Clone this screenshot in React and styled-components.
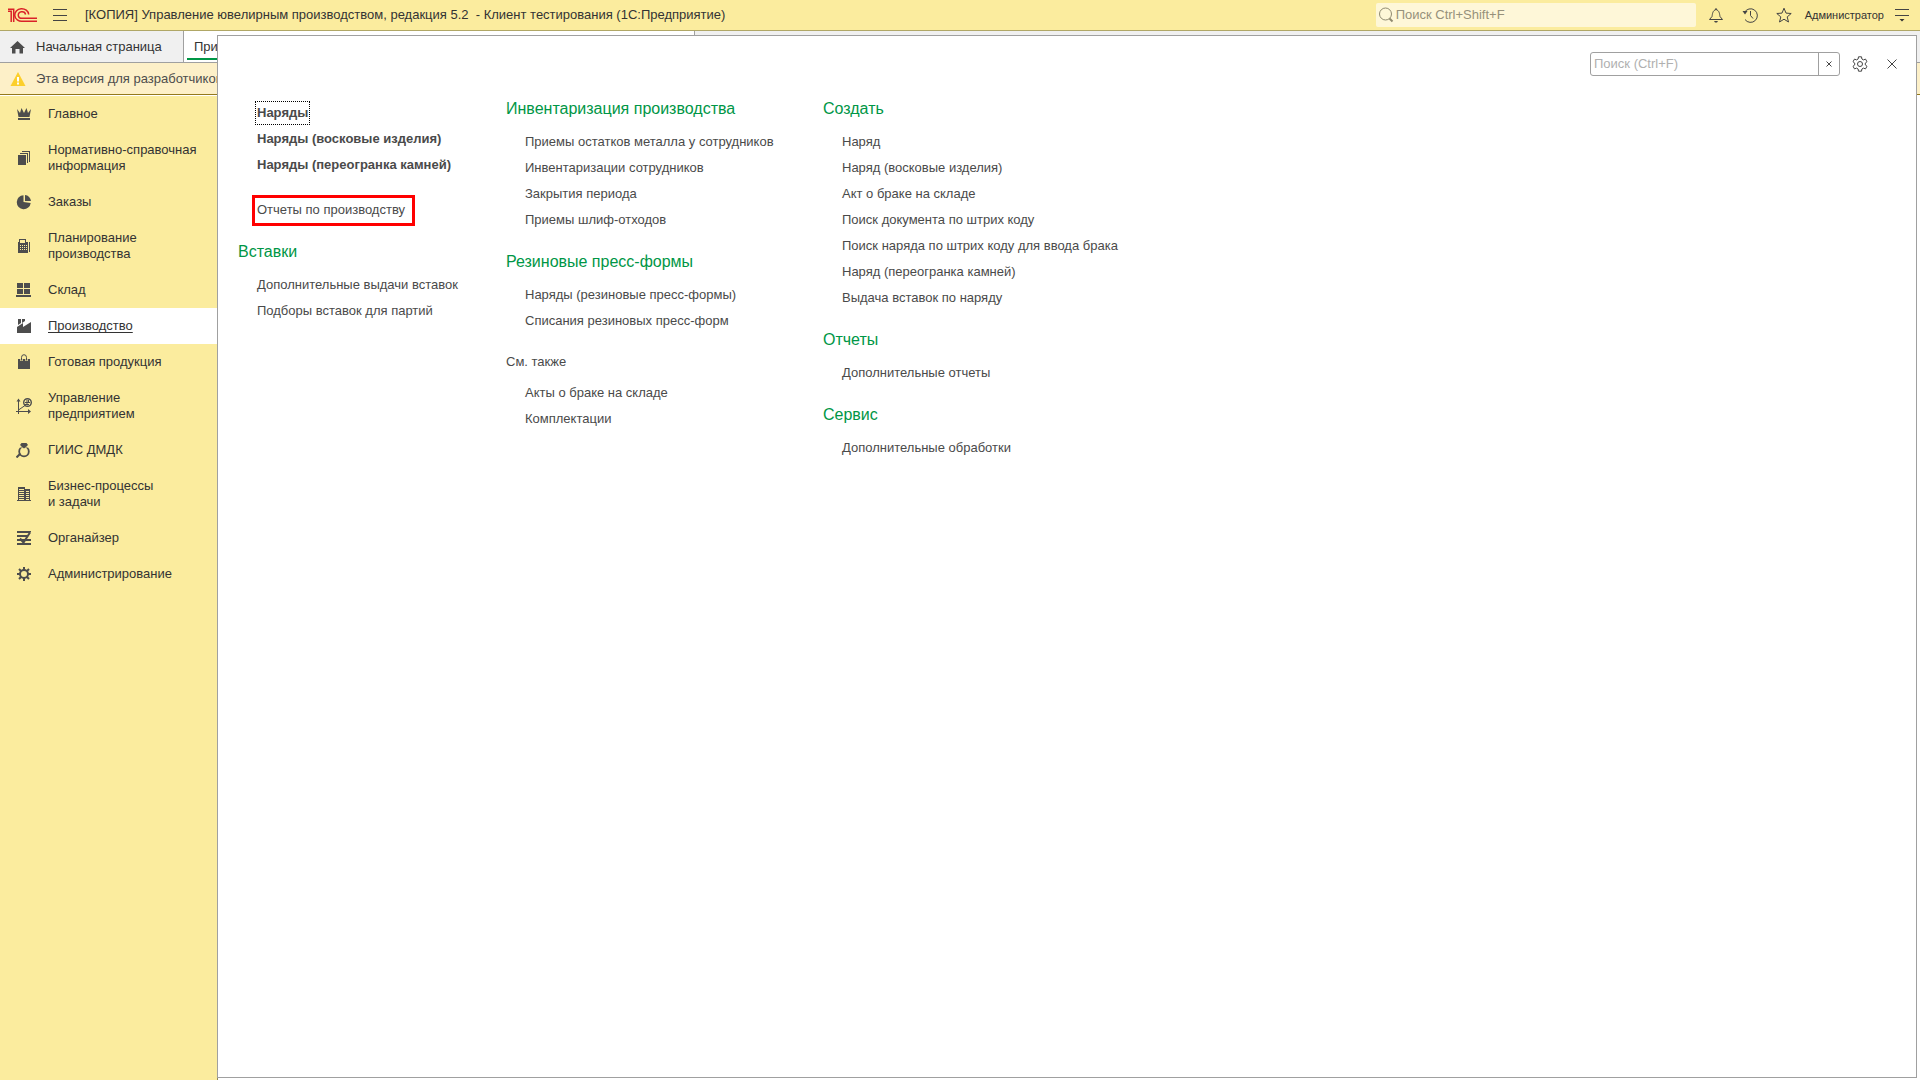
import React from "react";
import styled, { createGlobalStyle, css } from "styled-components";

const color = {
  yellow: "#fbec9e",
  yellowLine: "#b0a766",
  ink: "#333333",
  item: "#4a4a4a",
  icon: "#4d4d4d",
  green: "#009646",
  grey: "#a0a0a0",
  tabs: "#f0f0f0",
};

const GlobalStyle = createGlobalStyle`
  *, *::before, *::after { box-sizing: border-box; }
  body {
    margin: 0;
    background: #ffffff;
    color: ${color.ink};
    font-family: "Liberation Sans", Arial, sans-serif;
    font-size: 13px;
    line-height: 16px;
  }
  button, input { font: inherit; color: inherit; }
  a { color: inherit; text-decoration: none; }
  svg { display: block; flex: none; }
`;

const Shell = styled.div`
  position: relative;
  display: flex;
  flex-direction: column;
  min-height: 100vh;
`;

const TopBar = styled.header`
  display: flex;
  align-items: center;
  height: 31px;
  padding: 0 4px 0 8px;
  background: ${color.yellow};
  border-bottom: 1px solid ${color.yellowLine};
`;

const IconButton = styled.button`
  display: grid;
  place-items: center;
  flex: none;
  width: ${(p) => p.$width || 34}px;
  height: 24px;
  padding: 0;
  border: 0;
  background: none;
`;

const Title = styled.h1`
  flex: 1;
  margin: 0 0 0 3px;
  font-size: 13px;
  font-weight: 400;
  white-space: pre;
`;

const GlobalSearch = styled.label`
  display: flex;
  align-items: center;
  gap: 2px;
  width: 320px;
  height: 24px;
  margin-right: 3px;
  padding: 0 2px;
  border-radius: 2px;
  background: #fef7d8;
`;

const SearchInput = styled.input`
  flex: 1;
  min-width: 0;
  height: 22px;
  padding: 0 0 2px;
  border: 0;
  outline: 0;
  background: transparent;
  &::placeholder {
    color: ${(p) => p.$hint};
    opacity: 1;
  }
`;

const UserButton = styled.button`
  padding: 0 4px;
  border: 0;
  background: none;
  font-size: 11px;
  line-height: 16px;
`;

const TabBar = styled.div`
  display: flex;
  height: 32px;
  background: ${color.tabs};
  border-bottom: 1px solid ${color.grey};
`;

const Tab = styled.button`
  position: relative;
  display: flex;
  align-items: center;
  gap: 10px;
  width: ${(p) => p.$width}px;
  padding: 0 10px;
  border: 0;
  border-right: 1px solid ${color.grey};
  background: ${color.tabs};
  white-space: nowrap;
  ${(p) =>
    p.$active &&
    css`
      background: #ffffff;
      &::after {
        content: "";
        position: absolute;
        inset: auto 3px 2px 3px;
        height: 2px;
        background: ${color.green};
      }
    `}
`;

const Notice = styled.div`
  display: flex;
  align-items: center;
  gap: 10px;
  height: 32px;
  padding: 0 10px;
  background: #fdf0c8;
  border-bottom: 1px solid #94791c;
  color: #4d4d4d;
`;

const Body = styled.div`
  display: flex;
  flex: 1;
  padding-top: 1px;
`;

const Sidebar = styled.nav`
  display: flex;
  flex-direction: column;
  width: 218px;
  background: ${color.yellow};
  border-right: 1px solid #8f8857;
`;

const Section = styled.a`
  display: flex;
  align-items: center;
  gap: 16px;
  padding: 10px 16px;
  white-space: pre-line;
  background: ${(p) => (p.$active ? "#ffffff" : "transparent")};
  text-decoration: ${(p) => (p.$active ? "underline" : "none")};
  text-decoration-skip-ink: none;
  text-underline-offset: 2px;
`;

const Popup = styled.main`
  position: absolute;
  inset: 35px 3px 2px 217px;
  background: #ffffff;
  border: 1px solid ${color.grey};
`;

const PopupTools = styled.div`
  display: flex;
  justify-content: flex-end;
  align-items: center;
  padding: 16px 8px 0 0;
`;

const MenuSearch = styled.label`
  display: flex;
  width: 250px;
  height: 24px;
  margin-right: 4px;
  padding-left: 3px;
  border: 1px solid ${color.grey};
  border-radius: 3px;
`;

const ClearButton = styled.button`
  display: grid;
  place-items: center;
  width: 21px;
  padding: 0;
  border: 0;
  border-left: 1px solid ${color.grey};
  background: none;
`;

const Columns = styled.div`
  display: grid;
  grid-template-columns: 268px 317px auto;
  padding: 23px 20px;
`;

const Column = styled.section`
  color: ${color.item};
`;

const Group = styled.div`
  & + & {
    margin-top: ${(p) => (p.$untitled ? 20 : 19)}px;
  }
  &:first-child {
    margin-top: ${(p) => (p.$untitled ? 1 : 0)}px;
  }
`;

const GroupTitle = styled.h2`
  margin: 0 0 ${(p) => (p.$plain ? 9 : 10)}px;
  color: ${(p) => (p.$plain ? color.item : color.green)};
  font-size: ${(p) => (p.$plain ? 13 : 16)}px;
  font-weight: 400;
  line-height: ${(p) => (p.$plain ? 18 : 20)}px;
`;

const List = styled.ul`
  margin: 0;
  padding: 0 0 0 19px;
  list-style: none;
`;

const Row = styled.li`
  display: flex;
  align-items: center;
  height: 26px;
`;

const Command = styled.a`
  position: relative;
  font-weight: ${(p) => (p.$bold ? 700 : 400)};
  white-space: nowrap;
  ${(p) =>
    p.$focused &&
    css`
      outline: 1px dotted #000000;
      outline-offset: 1px;
      padding: 2px 0;
    `}
  ${(p) =>
    p.$marked &&
    css`
      &::after {
        content: "";
        position: absolute;
        inset: -7px -10px -8px -5px;
        border: 3px solid #ff0000;
      }
    `}
`;

const Svg = ({ size = 16, w, h, children, ...rest }) => (
  <svg
    width={w || size}
    height={h || size}
    viewBox={`0 0 ${w || size} ${h || size}`}
    fill="none"
    aria-hidden="true"
    {...rest}
  >
    {children}
  </svg>
);

const Logo = () => (
  <Svg w={30} h={18} stroke="#da2128" strokeWidth="1.5">
    <path d="M0 5.200h3.200V16M0 3.200h5.700V16" />
    <path d="M20.700 8.500A7 6.300 0 1 0 14.500 15.200H29" />
    <path d="M17.600 8.500A3.700 3.300 0 1 0 14.500 12.300H29" />
  </Svg>
);

const line = { stroke: "#444444", strokeWidth: 1 };

const icons = {
  crown: <path d="M1 3l3 4 1.500-5L8 7l2.500-5L12 7l3-4-1.500 8h-11zM2 12h12v2H2z" />,
  sheets: <path d="M2 5h8v10H2zM4 3h8v10h-1V4H4zM6 1h8v11h-1V2H6z" />,
  pie: (
    <>
      <path d="M7.500 1.200A7 7 0 1 0 14.700 9L7.500 8z" />
      <path d="M9 1a6.500 6.500 0 0 1 6 6H9z" />
    </>
  ),
  calc: (
    <path
      fillRule="evenodd"
      d="M3 1h7v3h2v11H2V4h1zM4 2v3h5V2zM4 7v1h1V7zM6 7v1h1V7zM8 7v1h1V7zM10 7v1h1V7zM4 9v1h1V9zM6 9v1h1V9zM8 9v1h1V9zM10 9v1h1V9zM4 11v1h1v-1zM6 11v1h1v-1zM8 11v1h1v-1zM10 11v1h1v-1zM13 4h1v10h-1z"
    />
  ),
  store: <path d="M1 1h6v5H1zM8 1h6v5H8zM1 7h6v5H1zM8 7h6v5H8zM0 13h15v2H0z" />,
  factory: <path d="M2 1h3v4L2 7zM6 1h3v2L6 5zM1 9l6-4v4l8-5v11H1z" />,
  bag: (
    <>
      <path d="M2 5h12v10H2z" />
      <path d="M5.500 7V3.500a2.500 2.800 0 0 1 5 0V7" fill="none" stroke="#fbec9e" strokeWidth="2.400" />
      <path d="M5.500 6.500V3.500a2.500 2.800 0 0 1 5 0V6.500" fill="none" stroke="#4d4d4d" strokeWidth="1" />
    </>
  ),
  growth: (
    <>
      <path d="M2.500 16V2M0 13.500h14M2.500 12L9 7.500" fill="none" stroke="#4d4d4d" />
      <path d="M0.500 3.500l2-3 2 3zM12 11l3 2.500-3 2.500z" />
      <circle cx="11.500" cy="4.500" r="3.800" fill="none" stroke="#4d4d4d" strokeWidth="1.400" />
      <path d="M9 4h5v1H9zM9 6h4v1H9zM10.500 2h1v5h-1zM12 2h1v2h-1z" />
    </>
  ),
  ring: (
    <>
      <circle cx="8" cy="9.500" r="4.800" fill="none" stroke="#4d4d4d" strokeWidth="1.800" />
      <path d="M4 5h8" stroke="#fbec9e" strokeWidth="1" />
      <path d="M5.500 1h5L12 3 8 6.500 4 3z" />
      <path d="M0.500 15.500l4-4" stroke="#4d4d4d" strokeWidth="2" />
    </>
  ),
  offices: (
    <path
      fillRule="evenodd"
      d="M2 1h7v2h5v11h1v1H1v-1h1zM3 3v1h5V3zM3 5v1h5V5zM3 7v1h5V7zM3 9v1h5V9zM3 11v1h5v-1zM3 13v1h5v-1zM10 5v1h3V5zM10 7v1h3V7zM10 9v1h3V9zM10 11v1h3v-1zM10 13v1h3v-1z"
    />
  ),
  organizer: (
    <>
      <path d="M1 1h14v2H1zM1 5h11v2H1zM1 9h14v2H1zM1 13h14v2H1z" />
      <path d="M3.500 8l4 4.500 7-10" fill="none" stroke="#fbec9e" strokeWidth="1" />
      <path d="M4 8.500l3.500 4 6.500-10" fill="none" stroke="#4d4d4d" strokeWidth="2" />
    </>
  ),
  gear: (
    <>
      <circle cx="8" cy="8" r="4" fill="none" stroke="#4d4d4d" strokeWidth="2" />
      <path
        d="M8 1v3M8 12v3M1 8h3M12 8h3M3 3l2 2M11 11l2 2M13 3l-2 2M5 11l-2 2"
        stroke="#4d4d4d"
        strokeWidth="2"
      />
    </>
  ),
};

const sections = [
  ["crown", "Главное"],
  ["sheets", "Нормативно-справочная\nинформация"],
  ["pie", "Заказы"],
  ["calc", "Планирование\nпроизводства"],
  ["store", "Склад"],
  ["factory", "Производство", true],
  ["bag", "Готовая продукция"],
  ["growth", "Управление\nпредприятием"],
  ["ring", "ГИИС ДМДК"],
  ["offices", "Бизнес-процессы\nи задачи"],
  ["organizer", "Органайзер"],
  ["gear", "Администрирование"],
];

const columns = [
  [
    {
      items: ["Наряды", "Наряды (восковые изделия)", "Наряды (переогранка камней)"],
      bold: true,
      focused: "Наряды",
    },
    { items: ["Отчеты по производству"], marked: "Отчеты по производству" },
    { title: "Вставки", items: ["Дополнительные выдачи вставок", "Подборы вставок для партий"] },
  ],
  [
    {
      title: "Инвентаризация производства",
      items: [
        "Приемы остатков металла у сотрудников",
        "Инвентаризации сотрудников",
        "Закрытия периода",
        "Приемы шлиф-отходов",
      ],
    },
    {
      title: "Резиновые пресс-формы",
      items: ["Наряды (резиновые пресс-формы)", "Списания резиновых пресс-форм"],
    },
    { title: "См. также", plain: true, items: ["Акты о браке на складе", "Комплектации"] },
  ],
  [
    {
      title: "Создать",
      items: [
        "Наряд",
        "Наряд (восковые изделия)",
        "Акт о браке на складе",
        "Поиск документа по штрих коду",
        "Поиск наряда по штрих коду для ввода брака",
        "Наряд (переогранка камней)",
        "Выдача вставок по наряду",
      ],
    },
    { title: "Отчеты", items: ["Дополнительные отчеты"] },
    { title: "Сервис", items: ["Дополнительные обработки"] },
  ],
];

export default function App() {
  return (
    <Shell>
      <GlobalStyle />
      <TopBar>
        <Logo />
        <IconButton $width={44} aria-label="Меню">
          <Svg {...line}>
            <path d="M1 2.500h14M1 8.500h14M1 13.500h14" />
          </Svg>
        </IconButton>
        <Title>{"[КОПИЯ] Управление ювелирным производством, редакция 5.2  - Клиент тестирования (1С:Предприятие)"}</Title>
        <GlobalSearch>
          <Svg stroke="#8f8a70" strokeWidth="1">
            <circle cx="7.500" cy="7" r="6" />
            <path d="M11.500 11.500l3 3" strokeWidth="2" />
          </Svg>
          <SearchInput $hint="#96917b" placeholder="Поиск Ctrl+Shift+F" aria-label="Глобальный поиск" />
        </GlobalSearch>
        <IconButton aria-label="Уведомления">
          <Svg {...line}>
            <path d="M1.500 12.500h13L12 9.500C11.500 7 11.500 3.500 8 2.500 4.500 3.500 4.500 7 4 9.500zM8 1v2" />
            <path d="M6 14h4l-1 1.500H7z" fill="#444444" stroke="none" />
          </Svg>
        </IconButton>
        <IconButton aria-label="История">
          <Svg {...line}>
            <path d="M2.500 5.500A6.800 6.800 0 1 1 3 12.500M8.500 4v4.500l2.500 3" />
            <path d="M0.500 4h5L3 7.500z" fill="#444444" stroke="none" />
          </Svg>
        </IconButton>
        <IconButton aria-label="Избранное">
          <Svg {...line}>
            <path d="M8 1.200l2 4.900 5.200.4-4 3.400 1.300 5.100L8 12.200 3.500 15l1.300-5.100-4-3.400L6 6.100z" />
          </Svg>
        </IconButton>
        <UserButton>Администратор</UserButton>
        <IconButton $width={28} aria-label="Сервис и настройки">
          <Svg {...line}>
            <path d="M1 2.500h14M1 8.500h14" />
            <path d="M5.500 12h5L8 14.500z" fill="#333333" stroke="none" />
          </Svg>
        </IconButton>
      </TopBar>

      <TabBar>
        <Tab $width={184}>
          <Svg fill={color.icon}>
            <path d="M7.500 2l7.500 7h-2v5.500H9.500V10h-4v4.500H2V9H0z" />
          </Svg>
          Начальная страница
        </Tab>
        <Tab $width={511} $active>
          При
        </Tab>
      </TabBar>

      <Notice>
        <Svg>
          <path d="M8 1l7.500 14H0.500z" fill="#fccf2c" />
          <path d="M7 6h2v4.500H7zM7 11.500h2v2H7z" fill="#ffffff" />
        </Svg>
        Эта версия для разработчиков
      </Notice>

      <Body>
        <Sidebar aria-label="Разделы">
          {sections.map(([icon, label, active]) => (
            <Section key={label} href="#" $active={active}>
              <Svg fill={color.icon}>{icons[icon]}</Svg>
              {label}
            </Section>
          ))}
        </Sidebar>
      </Body>

      <Popup>
        <PopupTools>
          <MenuSearch>
            <SearchInput $hint="#b0b0b0" placeholder="Поиск (Ctrl+F)" aria-label="Поиск по меню" />
            <ClearButton aria-label="Очистить">
              <Svg size={6} stroke="#444444" strokeWidth="1">
                <path d="M.5.5l5 5M5.500.5l-5 5" />
              </Svg>
            </ClearButton>
          </MenuSearch>
          <IconButton $width={32} aria-label="Настройка">
            <Svg {...line} strokeLinejoin="round">
              <path d="M6.500.8h3l.4 2.200 1.500.9 2.100-.8 1.500 2.600L13.300 7.100v1.800l1.700 1.400-1.500 2.600-2.100-.8-1.500.9-.4 2.200h-3l-.4-2.200-1.500-.9-2.100.8L1 10.300l1.700-1.400V7.100L1 5.700l1.500-2.600 2.100.8L6.100 3z" />
              <circle cx="8" cy="8" r="2.500" />
            </Svg>
          </IconButton>
          <IconButton $width={32} aria-label="Закрыть">
            <Svg size={10} {...line}>
              <path d="M.5.5l9 9M9.500.5l-9 9" />
            </Svg>
          </IconButton>
        </PopupTools>
        <Columns>
          {columns.map((groups, i) => (
            <Column key={i}>
              {groups.map((g, j) => (
                <Group key={j} $untitled={!g.title}>
                  {g.title && <GroupTitle $plain={g.plain}>{g.title}</GroupTitle>}
                  <List>
                    {g.items.map((t) => (
                      <Row key={t}>
                        <Command href="#" $bold={g.bold} $focused={g.focused === t} $marked={g.marked === t}>
                          {t}
                        </Command>
                      </Row>
                    ))}
                  </List>
                </Group>
              ))}
            </Column>
          ))}
        </Columns>
      </Popup>
    </Shell>
  );
}
